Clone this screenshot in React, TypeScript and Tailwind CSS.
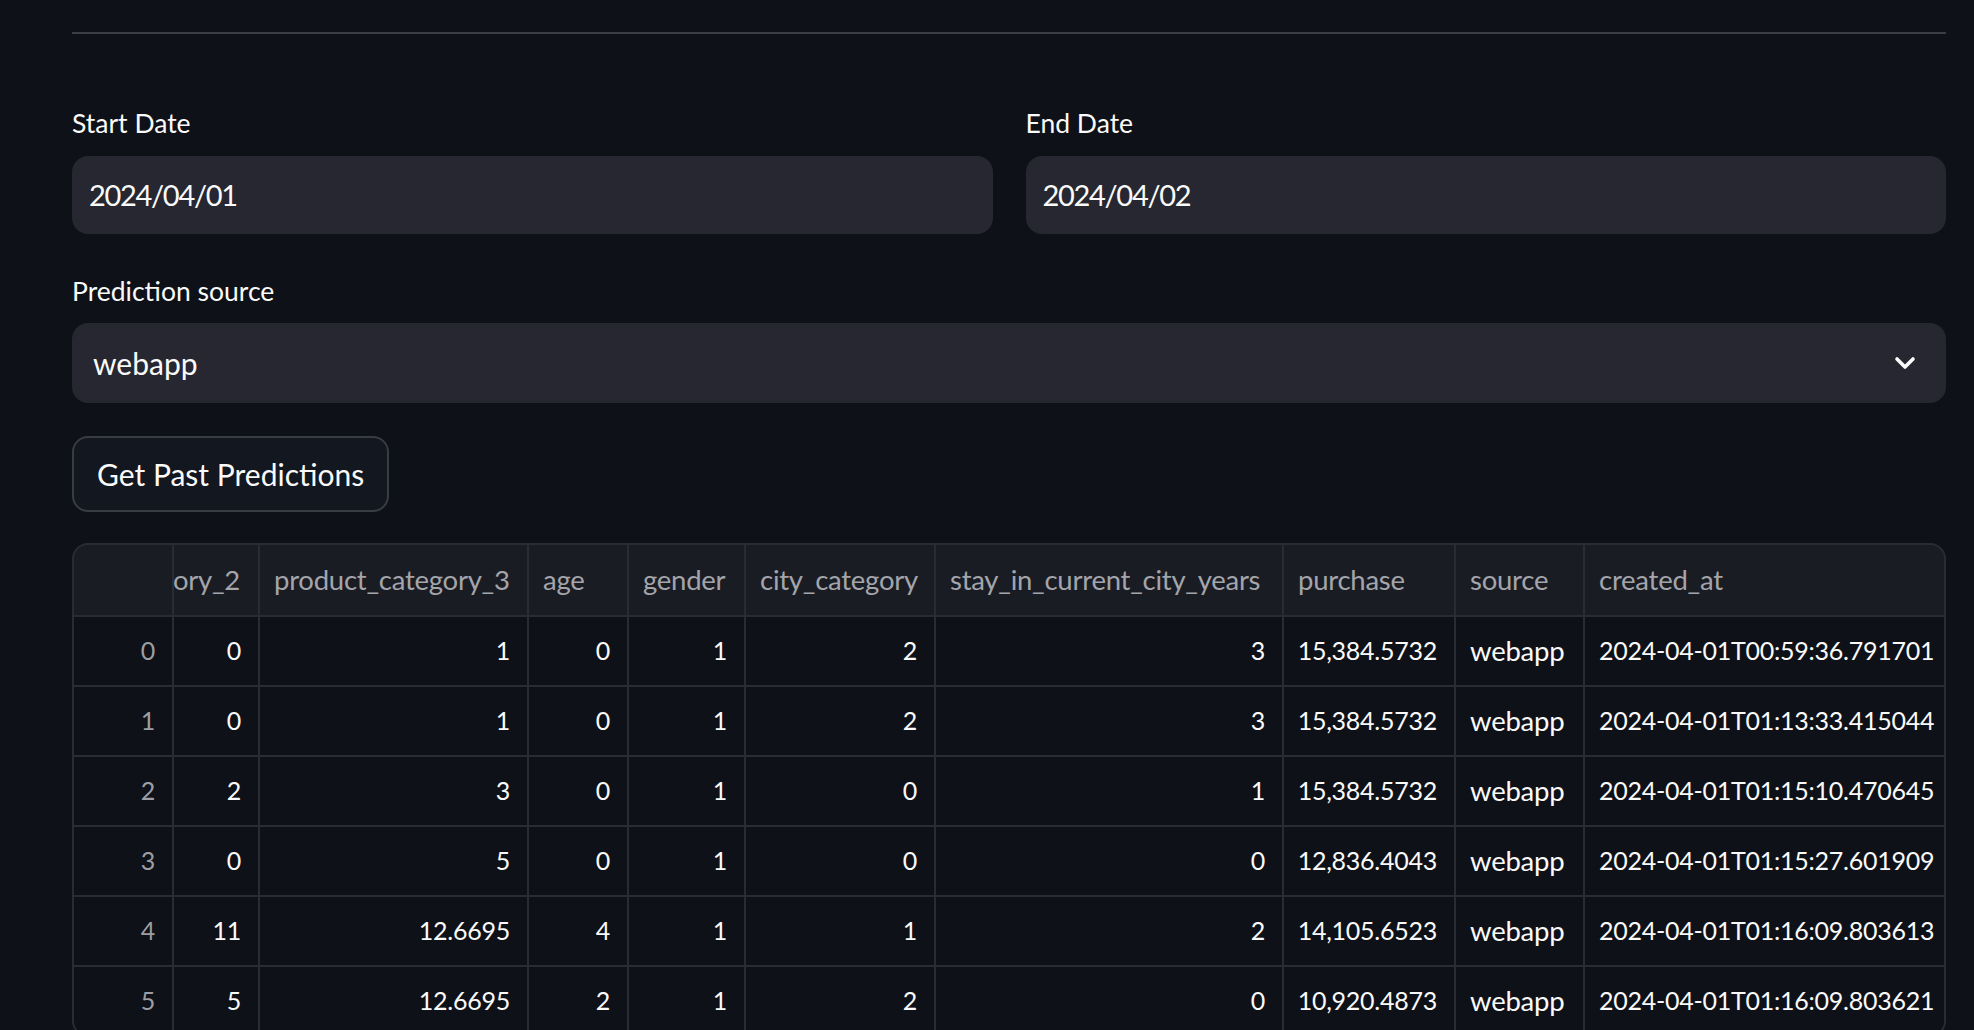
const font = "font-['Lato','Noto_Sans',sans-serif]";

const columns = [
  { label: 'product_category_2', align: 'right', clipped: true },
  { label: 'product_category_3', align: 'right' },
  { label: 'age', align: 'right' },
  { label: 'gender', align: 'right' },
  { label: 'city_category', align: 'right' },
  { label: 'stay_in_current_city_years', align: 'right' },
  { label: 'purchase', align: 'right' },
  { label: 'source', align: 'left' },
  { label: 'created_at', align: 'left' },
];

const rows = [
  ['0', '1', '0', '1', '2', '3', '15,384.5732', 'webapp', '2024-04-01T00:59:36.791701'],
  ['0', '1', '0', '1', '2', '3', '15,384.5732', 'webapp', '2024-04-01T01:13:33.415044'],
  ['2', '3', '0', '1', '0', '1', '15,384.5732', 'webapp', '2024-04-01T01:15:10.470645'],
  ['0', '5', '0', '1', '0', '0', '12,836.4043', 'webapp', '2024-04-01T01:15:27.601909'],
  ['11', '12.6695', '4', '1', '1', '2', '14,105.6523', 'webapp', '2024-04-01T01:16:09.803613'],
  ['5', '12.6695', '2', '1', '2', '0', '10,920.4873', 'webapp', '2024-04-01T01:16:09.803621'],
];

function Label({ children }: { children: React.ReactNode }) {
  return <div className="h-[34px] text-[26.5px] leading-[34px] text-[#fafafa]">{children}</div>;
}

function DateInput({ label, value }: { label: string; value: string }) {
  return (
    <div className="flex flex-col">
      <Label>{label}</Label>
      <div className="mt-[16px] flex h-[78px] items-center rounded-[16px] bg-[#262730] pl-[17px] text-[29px] tracking-[-0.045em] text-[#fafafa]">
        {value}
      </div>
    </div>
  );
}

function Chevron() {
  return (
    <svg width="22" height="14" viewBox="0 0 22 14" fill="none" className="text-[#fafafa]">
      <path d="M3 3l8 8 8-8" stroke="currentColor" strokeWidth="3.6" strokeLinecap="round" strokeLinejoin="round" />
    </svg>
  );
}

function DataTable() {
  return (
    <div className="grid grid-cols-[98px_84px_267px_98px_115px_188px_346px_170px_127px_359px] gap-[2px] overflow-hidden rounded-[16px] border-2 border-[#2a2c33] bg-[#2a2c33] text-[25px] tracking-[-0.01em]">
      {/* header */}
      <div className="h-[70px] bg-[#1a1c24]" />
      {columns.map((col) => (
        <div
          key={col.label}
          className={
            col.clipped
              ? 'flex h-[70px] items-center justify-end overflow-hidden whitespace-nowrap bg-[#1a1c24] pr-[18px] text-[27.5px] text-[#a3a5ab]'
              : 'flex h-[70px] items-center overflow-hidden whitespace-nowrap bg-[#1a1c24] pl-[14px] text-[27.5px] text-[#a3a5ab]'
          }
        >
          {col.label}
        </div>
      ))}

      {/* body */}
      {rows.map((row, i) => (
        <div key={i} className="contents">
          <div className="flex h-[68px] items-center justify-end bg-[#0e1117] pr-[17px] text-[#9d9ea3]">
            {i}
          </div>
          {row.map((cell, j) => (
            <div
              key={j}
              className={
                columns[j].align === 'right'
                  ? 'flex h-[68px] items-center justify-end whitespace-nowrap bg-[#0e1117] pr-[17px] text-[#fafafa]'
                  : j === 7
                    ? 'flex h-[68px] items-center whitespace-nowrap bg-[#0e1117] pl-[14px] text-[27.5px] text-[#fafafa]'
                    : 'flex h-[68px] items-center whitespace-nowrap bg-[#0e1117] pl-[14px] text-[#fafafa]'
              }
            >
              {cell}
            </div>
          ))}
        </div>
      ))}
    </div>
  );
}

export default function App() {
  return (
    <div className={`min-h-screen bg-[#0e1117] pb-10 pl-[72px] pr-[28px] pt-[32px] ${font}`}>
      <div className="h-[2px] bg-[#3b3d44]" />

      <div className="mt-[72px] grid grid-cols-2 gap-[33px]">
        <DateInput label="Start Date" value="2024/04/01" />
        <DateInput label="End Date" value="2024/04/02" />
      </div>

      <div className="mt-[40px]">
        <Label>Prediction source</Label>
        <div className="mt-[15px] flex h-[80px] items-center justify-between rounded-[16px] bg-[#262730] pl-[21px] pr-[30px] text-[30px] text-[#fafafa]">
          <span>webapp</span>
          <Chevron />
        </div>
      </div>

      <button className="mt-[33px] h-[76px] rounded-[16px] border-2 border-[#3a3c43] bg-[#131720] px-[23px] text-[30px] text-[#fafafa]">
        Get Past Predictions
      </button>

      <div className="mt-[31px]">
        <DataTable />
      </div>
    </div>
  );
}
